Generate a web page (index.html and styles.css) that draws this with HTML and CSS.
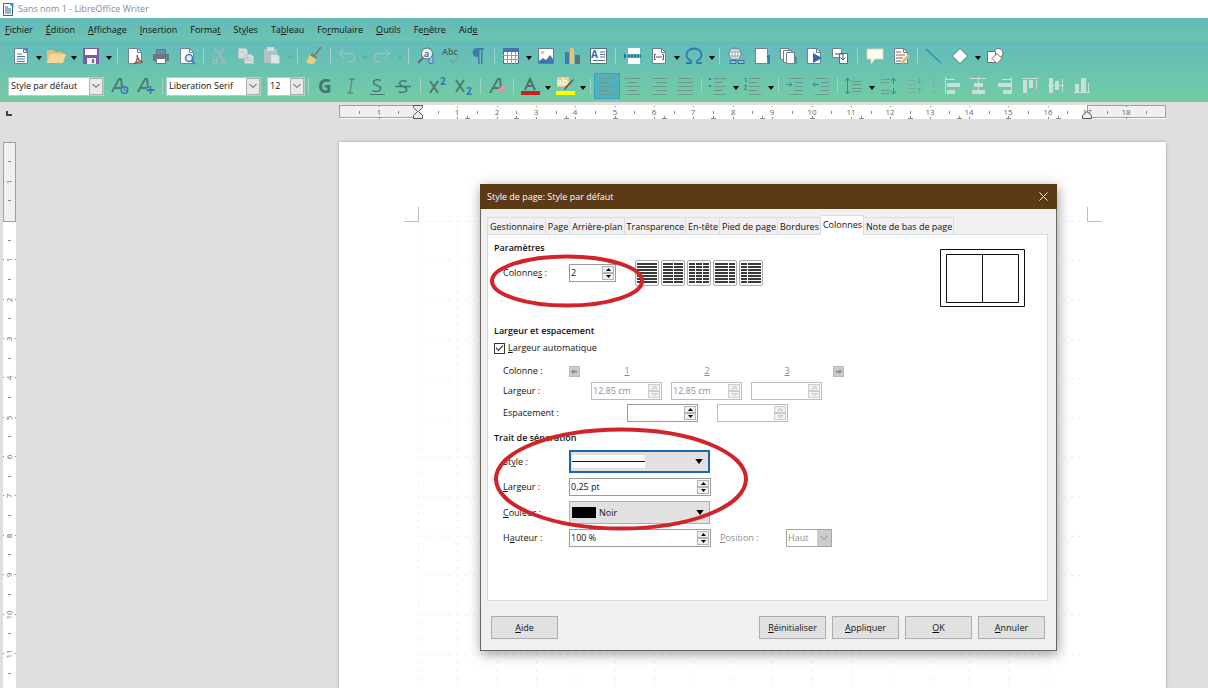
FILE: index.html
```
<!DOCTYPE html>
<html lang="fr">
<head>
<meta charset="utf-8">
<title>Sans nom 1 - LibreOffice Writer</title>
<link rel="stylesheet" href="styles.css">
</head>
<body>
<svg class="defs" width="0" height="0" aria-hidden="true">
  <symbol id="drop" viewBox="0 0 6 4"><path d="M0 0h6L3 4z"/></symbol>
  <symbol id="chev" viewBox="0 0 10 6"><path d="M1.500 1l3.500 3.500L8.500 1" fill="none" stroke="currentColor"/></symbol>
  <symbol id="up" viewBox="0 0 5 3"><path d="M0 3h5L2.500 0z"/></symbol>
  <symbol id="down" viewBox="0 0 5 3"><path d="M0 0h5L2.500 3z"/></symbol>
  <symbol id="sheet" viewBox="0 0 20 20"><path d="M3.500 2.500h9l4 4v11h-13z" fill="#fff" stroke="#71808a"/><path d="M12.500 2.500v4h4" fill="none" stroke="#71808a"/></symbol>
</svg>

<header class="titlebar">
  <svg class="app-icon" viewBox="0 0 12 13"><path d="M1.500.500h6l3 3v9h-9z" fill="#fff" stroke="#2a6c87"/><path d="M7 0h4.500v4.500z" fill="#17a1d0"/><path d="M3 4h3M3 6h6M3 8h6M3 10h6" stroke="#2a6c87"/></svg>
  <h1>Sans nom 1 - LibreOffice Writer</h1>
</header>

<nav class="menubar">
  <button><u>F</u>ichier</button><button><u>É</u>dition</button><button><u>A</u>ffichage</button><button><u>I</u>nsertion</button><button>Forma<u>t</u></button><button>St<u>y</u>les</button><button>Ta<u>b</u>leau</button><button>Fo<u>r</u>mulaire</button><button><u>O</u>utils</button><button>Fe<u>n</u>être</button><button>Aid<u>e</u></button>
</nav>

<div class="toolbars">
  <div class="toolbar" role="toolbar" aria-label="Standard">
    <span class="grip"></span>
    <button class="tool" aria-label="Nouveau"><svg viewBox="0 0 20 20"><use href="#sheet"/><path d="M12 2h5v5z" fill="#4a86c5"/><path d="M6 8h5M6 10.500h8M6 13h8M6 15.500h8" stroke="#4a78a8"/></svg></button>
    <button class="drop" aria-label="Liste Nouveau"><svg><use href="#drop"/></svg></button>
    <button class="tool" aria-label="Ouvrir"><svg viewBox="0 0 20 20"><path d="M1 17V4h6l2 2h8v11z" fill="#e3bd7b"/><path d="M1 17L4 8h16l-3 9z" fill="#f5d79a"/></svg></button>
    <button class="drop" aria-label="Liste Ouvrir"><svg><use href="#drop"/></svg></button>
    <button class="tool" aria-label="Enregistrer"><svg viewBox="0 0 20 20"><path d="M2 2h16v16H2z" fill="#8059a6"/><path d="M4 3h12v6H4z" fill="#fff"/><path d="M6 12h9v6H6z" fill="#f2edf7"/><path d="M11 13h2v4h-2z" fill="#8059a6"/></svg></button>
    <button class="drop" aria-label="Liste Enregistrer"><svg><use href="#drop"/></svg></button>
    <span class="sep wide"></span>
    <button class="tool" aria-label="Exporter au format PDF"><svg viewBox="0 0 20 20"><use href="#sheet"/><path d="M9 18c3-2 4-6 3-9 1 5 3 7 6 7-3-.5-6 0-9 2z" fill="none" stroke="#8a5146" stroke-width="1.300"/></svg></button>
    <button class="tool" aria-label="Imprimer"><svg viewBox="0 0 20 20"><path d="M5.500 3.500h9v5h-9z" fill="#6b8fb4" stroke="#5a7390"/><path d="M2 8h16v7H2z" fill="#6b7884"/><path d="M5.500 12.500h9v5h-9z" fill="#fff" stroke="#6b7884"/></svg></button>
    <button class="tool" aria-label="Aperçu"><svg viewBox="0 0 20 20"><use href="#sheet"/><circle cx="12" cy="12" r="3.500" fill="#dceefa" stroke="#3f7fb8" stroke-width="1.500"/><path d="M14.500 14.500L18 18" stroke="#3f7fb8" stroke-width="2"/></svg></button>
    <span class="sep"></span>
    <button class="tool" aria-label="Couper" disabled><svg viewBox="0 0 20 20" fill="none" stroke="#9fbcbc" stroke-width="1.600"><path d="M5 2l8 12M14 2L6 14"/><circle cx="5" cy="16" r="2"/><circle cx="14" cy="16" r="2"/></svg></button>
    <button class="tool" aria-label="Copier" disabled><svg viewBox="0 0 20 20" fill="#d6dfdf" stroke="#b3c4c4"><path d="M2.500 2.500h7l2 2v8h-9zM8.500 8.500h7l2 2v7h-9z"/><path d="M10 12h5M10 14.500h6M4 6h4"/></svg></button>
    <button class="tool" aria-label="Coller" disabled><svg viewBox="0 0 20 20"><path d="M2 3h13v14H2z" fill="#b3c2c2"/><path d="M5 1h7v4H5z" fill="#d3dddc"/><path d="M8.500 8.500h7l2 2v7h-9z" fill="#dde5e4" stroke="#b3c4c4"/></svg></button>
    <button class="drop faint" aria-label="Liste Coller" disabled><svg><use href="#drop"/></svg></button>
    <span class="sep"></span>
    <button class="tool" aria-label="Cloner le formatage"><svg viewBox="0 0 20 20"><path d="M17 1l-6 8" stroke="#7d7f75" stroke-width="2"/><path d="M8 7l5 4-1 2-6-4z" fill="#7d7f75"/><path d="M5 9l7 4c0 3-2 5-4 5-3 0-5-1-6-3 2-1 3-3 3-6z" fill="#f0cb86"/></svg></button>
    <span class="sep"></span>
    <button class="tool" aria-label="Annuler" disabled><svg viewBox="0 0 20 20" fill="none" stroke="#97bfbf" stroke-width="1.700"><path d="M7 3L2.500 7.500 7 12M3 7.500h10c6 0 6 8 0 8.500h-2"/></svg></button>
    <button class="drop faint" aria-label="Liste Annuler" disabled><svg><use href="#drop"/></svg></button>
    <button class="tool" aria-label="Rétablir" disabled><svg viewBox="0 0 20 20" fill="none" stroke="#97bfbf" stroke-width="1.700"><path d="M13 3l4.500 4.500L13 12M17 7.500H7c-6 0-6 8 0 8.500h2"/></svg></button>
    <button class="drop faint" aria-label="Liste Rétablir" disabled><svg><use href="#drop"/></svg></button>
    <span class="sep wider"></span>
    <button class="tool" aria-label="Rechercher et remplacer"><svg viewBox="0 0 20 20"><path d="M7 12l-5 5" stroke="#5c6b6b" stroke-width="2"/><path d="M13 8.500h4v9h-4z" fill="#8fc4e8" stroke="#3f7fb8"/><circle cx="11" cy="7.500" r="5.500" fill="#eef6f8" stroke="#5c6b6b"/><text x="8" y="11" class="t9" fill="#4a5a60">a</text></svg></button>
    <button class="tool" aria-label="Orthographe"><svg viewBox="0 0 20 20"><text x="0" y="9" class="t9" fill="#46645f">Abc</text><path d="M8 14l3 3 6-7" fill="none" stroke="#6ca59c" stroke-width="1.500"/></svg></button>
    <button class="tool" aria-label="Marques de formatage"><svg viewBox="0 0 20 20"><path d="M16 2H9a4.500 4.500 0 0 0 0 9h1v7h1.500V3.500H13V18h1.500V3.500H16z" fill="#4079ae"/></svg></button>
    <span class="sep"></span>
    <button class="tool" aria-label="Tableau"><svg viewBox="0 0 20 20"><path d="M2.500 2.500h15v15h-15z" fill="#fff" stroke="#4a6b8c"/><path d="M2 2h16v4H2z" fill="#3f74ad"/><path d="M2 9.500h16M2 13.500h16M6.500 6v12M10.500 6v12M14.500 6v12" stroke="#8b9fb5"/></svg></button>
    <button class="drop" aria-label="Liste Tableau"><svg><use href="#drop"/></svg></button>
    <button class="tool" aria-label="Image"><svg viewBox="0 0 20 20"><path d="M2.500 2.500h15v15h-15z" fill="#fff" stroke="#5e7f92"/><circle cx="6.500" cy="6.500" r="1.800" fill="#f0c27d"/><path d="M3 15l4-3 3 2 4-5 3 4v4H3z" fill="#3f74ad"/></svg></button>
    <button class="tool" aria-label="Diagramme"><svg viewBox="0 0 20 20"><path d="M3 6h4v12H3z" fill="#3f79b5"/><path d="M8 2h4v16H8z" fill="#e5c17e"/><path d="M13 9h5v9h-5z" fill="#5c737a"/></svg></button>
    <button class="tool" aria-label="Zone de texte"><svg viewBox="0 0 20 20"><path d="M2.500 2.500h16v15h-16z" fill="#fff" stroke="#55707c"/><text x="3" y="12" class="t10" fill="#2f6ba8">A</text><path d="M12 6h5M12 8.500h5M12 11h5M5 14.500h12" stroke="#55707c"/></svg></button>
    <span class="sep wide"></span>
    <button class="tool" aria-label="Saut de page"><svg viewBox="0 0 20 20"><path d="M5 2h12v6H5zM5 12h12v6H5z" fill="#fff"/><path d="M5 10h13" stroke="#2f6ba8" stroke-width="3" stroke-dasharray="2 1"/><path d="M1 7l3 3-3 3z" fill="#2f6ba8"/></svg></button>
    <button class="tool" aria-label="Champ"><svg viewBox="0 0 20 20"><use href="#sheet"/><path d="M7 8.500H5.500v5H7M13 8.500h1.500v5H13M7 11h6" fill="none" stroke="#44606c"/></svg></button>
    <button class="drop" aria-label="Liste Champ"><svg><use href="#drop"/></svg></button>
    <button class="tool" aria-label="Caractère spécial"><svg viewBox="0 0 20 20"><path d="M2 17h5v-2C3.500 13 2.500 11 2.500 8.500 2.500 5 6 2.500 10 2.500S17.500 5 17.500 8.500c0 2.500-1 4.500-4.500 6.500v2h5" fill="none" stroke="#3577ae" stroke-width="1.800"/></svg></button>
    <button class="drop" aria-label="Liste Caractère spécial"><svg><use href="#drop"/></svg></button>
    <span class="sep"></span>
    <button class="tool" aria-label="Hyperlien"><svg viewBox="0 0 20 20"><circle cx="9" cy="8" r="6" fill="#fff" stroke="#5f7b85"/><path d="M3 6h12M3 10h12M9 2v12M9 2c-4 3-4 9 0 12M9 2c4 3 4 9 0 12" fill="none" stroke="#7b939b" stroke-width=".8"/><path d="M4 14.500h6v3H4zM12 14.500h6v3h-6z" fill="#8fc4e0" stroke="#2f6ba8"/></svg></button>
    <button class="tool" aria-label="Note de bas de page"><svg viewBox="0 0 20 20"><path d="M3.500 2.500h12v15h-12z" fill="#fff" stroke="#71808a"/><path d="M15 11l2-1v8" fill="none" stroke="#2f6ba8" stroke-width="1.500"/></svg></button>
    <button class="tool" aria-label="Note de fin"><svg viewBox="0 0 20 20" fill="#fff" stroke="#71808a"><path d="M2.500 2.500h8v11h-8z"/><path d="M5.500 4.500h8v12h-8z"/><path d="M8.500 6.500h8v11h-8z"/><path d="M16 12l2-1v7" fill="none" stroke="#2f6ba8"/></svg></button>
    <button class="tool" aria-label="Repère de texte"><svg viewBox="0 0 20 20"><use href="#sheet"/><path d="M9 7l9 5-9 5z" fill="#2f6ba8"/></svg></button>
    <button class="tool" aria-label="Renvoi"><svg viewBox="0 0 20 20"><path d="M2.500 2.500h9v9h-9z" fill="#fff" stroke="#71808a"/><path d="M9.500 7.500h8v10h-8z" fill="#fff" stroke="#55707c"/><path d="M5 8h8v6M10.500 11.500L13 14l2.500-2.500" fill="none" stroke="#375f74"/></svg></button>
    <span class="sep wide"></span>
    <button class="tool" aria-label="Commentaire"><svg viewBox="0 0 20 20"><path d="M2 3h16v10h-8l-4 5v-5H2z" fill="#fffdf0" stroke="#d7d5ab"/></svg></button>
    <button class="tool" aria-label="Suivi des modifications"><svg viewBox="0 0 20 20"><use href="#sheet"/><path d="M5 6h5M5 9h9M5 12h7" stroke="#a15353"/><path d="M5 15h5" stroke="#4c6b75"/><path d="M18 9l-7 8" stroke="#d4bd75" stroke-width="3"/></svg></button>
    <span class="sep"></span>
    <button class="tool" aria-label="Ligne"><svg viewBox="0 0 20 20"><path d="M2 3l15 14" stroke="#318fae" stroke-width="1.300"/></svg></button>
    <button class="tool" aria-label="Formes"><svg viewBox="0 0 20 20"><path d="M10 2.500l7.500 7.500-7.500 7.500L2.500 10z" fill="#fff" stroke="#5c7f86"/></svg></button>
    <button class="drop" aria-label="Liste Formes"><svg><use href="#drop"/></svg></button>
    <button class="tool" aria-label="Fonctions de dessin"><svg viewBox="0 0 20 20" fill="#fff" stroke="#5f7478"><circle cx="13.500" cy="7" r="4.500"/><path d="M2.500 5.500h8v11h-8z"/><path d="M12 7.500l5 5-5 5-5-5z" stroke="#865f68"/></svg></button>
  </div>

  <div class="toolbar" role="toolbar" aria-label="Formatage">
    <span class="grip"></span>
    <span class="combo combo-style"><input aria-label="Style de paragraphe" value="Style par défaut"><button aria-label="Choisir un style"><svg><use href="#chev"/></svg></button></span>
    <button class="tool after-combo" aria-label="Actualiser le style"><svg viewBox="0 0 20 20"><path d="M2 16L9 3l2 0 1 8M5 12h6" fill="none" stroke="#4f7a74" stroke-width="1.900"/><circle cx="14.500" cy="14" r="3.300" fill="none" stroke="#3577ae" stroke-width="1.400"/><path d="M14.500 11.500v3h2.500" fill="none" stroke="#3577ae"/></svg></button>
    <button class="tool" aria-label="Nouveau style"><svg viewBox="0 0 20 20"><path d="M2 16L9 3l2 0 1 9M5 12h6" fill="none" stroke="#4f7a74" stroke-width="1.900"/><path d="M14.500 10v8M10.500 14h8" stroke="#3577ae" stroke-width="1.800"/></svg></button>
    <span class="sep"></span>
    <span class="combo combo-font"><input aria-label="Police" value="Liberation Serif"><button aria-label="Choisir une police"><svg><use href="#chev"/></svg></button></span>
    <span class="combo combo-size"><input aria-label="Taille" value="12"><button aria-label="Choisir une taille"><svg><use href="#chev"/></svg></button></span>
    <span class="sep"></span>
    <button class="tool" aria-label="Gras"><svg viewBox="0 0 20 20"><text x="10" y="17" class="glyph bold">G</text></svg></button>
    <button class="tool" aria-label="Italique"><svg viewBox="0 0 20 20"><path d="M8 3h6M11 3L9 17M6 17h6" fill="none" stroke="#5d8a82" stroke-width="1.400"/></svg></button>
    <button class="tool" aria-label="Souligné"><svg viewBox="0 0 20 20"><text x="10" y="16" class="glyph">S</text><path d="M3 18.500h15" stroke="#47766f"/></svg></button>
    <button class="tool" aria-label="Barré"><svg viewBox="0 0 20 20"><text x="10" y="17" class="glyph">S</text><path d="M2 10.500h16" stroke="#47766f" stroke-width="1.500"/></svg></button>
    <span class="sep wide"></span>
    <button class="tool" aria-label="Exposant"><svg viewBox="0 0 20 20"><path d="M2 5l8 12M10 5L2 17" stroke="#4f7a74" stroke-width="1.900"/><text x="12" y="9" class="t10 blue">2</text></svg></button>
    <button class="tool" aria-label="Indice"><svg viewBox="0 0 20 20"><path d="M2 4l8 12M10 4L2 16" stroke="#4f7a74" stroke-width="1.900"/><text x="12" y="19" class="t10 blue">2</text></svg></button>
    <span class="sep"></span>
    <button class="tool" aria-label="Effacer le formatage"><svg viewBox="0 0 20 20"><path d="M3 17L11 3l2 0 1 9M6 12h7" fill="none" stroke="#4f7a74" stroke-width="1.900"/><path d="M17.500 10l-6 6" stroke="#dc97a8" stroke-width="4"/></svg></button>
    <span class="sep"></span>
    <button class="tool" aria-label="Couleur de police"><svg viewBox="0 0 20 20"><path d="M5 14l5-11 5 11M7 10h6" fill="none" stroke="#47766f" stroke-width="2"/><path d="M1 15h19v4H1z" fill="#c9211e"/></svg></button>
    <button class="drop" aria-label="Liste Couleur de police"><svg><use href="#drop"/></svg></button>
    <button class="tool" aria-label="Surlignage"><svg viewBox="0 0 20 20"><path d="M2 1h12v10H2z" fill="#f3cf8e"/><text x="2" y="9" class="t9" fill="#fff">ab</text><path d="M19 4l-8 9-2 1 1-3 8-8z" fill="#47645f"/><path d="M1 15h19v4H1z" fill="#ff0"/></svg></button>
    <button class="drop" aria-label="Liste Surlignage"><svg><use href="#drop"/></svg></button>
    <span class="sep"></span>
    <button class="tool active" aria-label="Aligner à gauche" aria-pressed="true"><svg viewBox="0 0 20 20" class="lines"><path d="M2 2.500h15M2 6.500h10M2 10.500h15M2 14.500h10M2 18.500h15"/></svg></button>
    <button class="tool" aria-label="Centrer"><svg viewBox="0 0 20 20" class="lines"><path d="M2 2.500h15M5 6.500h9M2 10.500h15M5 14.500h9M2 18.500h15"/></svg></button>
    <button class="tool" aria-label="Aligner à droite"><svg viewBox="0 0 20 20" class="lines"><path d="M3 2.500h15M8 6.500h10M3 10.500h15M8 14.500h10M3 18.500h15"/></svg></button>
    <button class="tool" aria-label="Justifier"><svg viewBox="0 0 20 20" class="lines"><path d="M3 2.500h15M3 6.500h15M3 10.500h15M3 14.500h15M3 18.500h15"/></svg></button>
    <span class="sep"></span>
    <button class="tool" aria-label="Puces"><svg viewBox="0 0 20 20" class="lines"><path d="M6 2.500h12M6 6.500h8M6 10.500h12M6 14.500h8M6 18.500h12"/><path d="M1 3h2M1 10h2" class="mark"/></svg></button>
    <button class="drop" aria-label="Liste Puces"><svg><use href="#drop"/></svg></button>
    <button class="tool" aria-label="Numérotation"><svg viewBox="0 0 20 20" class="lines"><path d="M6 2.500h12M6 6.500h8M6 10.500h12M6 14.500h8M6 18.500h12"/><path d="M1.500 2.500h1.500v4M1 9.500h2.500l-2 4h2.500" class="thin"/></svg></button>
    <button class="drop" aria-label="Liste Numérotation"><svg><use href="#drop"/></svg></button>
    <span class="sep"></span>
    <button class="tool" aria-label="Augmenter le retrait"><svg viewBox="0 0 20 20" class="lines"><path d="M4 2.500h14M10 6.500h8M10 10.500h8M10 14.500h8M4 18.500h14"/><path d="M1 8.500h6M4.500 6L7 8.500 4.500 11" class="thin"/></svg></button>
    <button class="tool" aria-label="Diminuer le retrait"><svg viewBox="0 0 20 20" class="lines"><path d="M4 2.500h14M10 6.500h8M10 10.500h8M10 14.500h8M4 18.500h14"/><path d="M8 8.500H2M4.500 6L2 8.500 4.500 11" class="thin"/></svg></button>
    <span class="sep"></span>
    <button class="tool" aria-label="Interligne"><svg viewBox="0 0 20 20" class="lines"><path d="M8 5.500h10M8 8.500h10M8 12.500h10M8 15.500h10"/><path d="M3.500 2v16M1 5l2.500-3L6 5M1 15l2.500 3L6 15" class="thin"/></svg></button>
    <button class="drop" aria-label="Liste Interligne"><svg><use href="#drop"/></svg></button>
    <button class="tool" aria-label="Augmenter l'espacement"><svg viewBox="0 0 20 20" class="lines"><path d="M2 3.500h9M2 6.500h9M2 14.500h9M2 17.500h9"/><path d="M14.500 2v6M14.500 12v6M12 5l2.500-3L17 5M12 15l2.500 3 2.500-3" class="thin"/></svg></button>
    <button class="tool dim" aria-label="Diminuer l'espacement"><svg viewBox="0 0 20 20" class="lines"><path d="M2 4.500h9M2 8.500h9M2 12.500h9M2 16.500h9"/><path d="M14.500 2v6M14.500 12v6M12 5.500L14.500 8 17 5.500M12 14.500l2.500-2.500 2.500 2.500" class="thin"/></svg></button>
    <span class="sep wider dotted"></span>
    <button class="tool" aria-label="Aligner les objets à gauche"><svg viewBox="0 0 20 20" class="shape"><path d="M3 1h1v17H3zM5 7h13v4H5zM5 14h8v4H5zM4 3h9v1H4z"/></svg></button>
    <button class="tool" aria-label="Centrer les objets"><svg viewBox="0 0 20 20" class="shape"><path d="M2 2h16v1H2zM10 1h1v17h-1zM6 7h9v4H6zM4 14h13v4H4z"/></svg></button>
    <button class="tool" aria-label="Aligner les objets à droite"><svg viewBox="0 0 20 20" class="shape"><path d="M17 1h1v17h-1zM4 7h13v4H4zM9 14h8v4H9zM8 3h9v1H8z"/></svg></button>
    <button class="tool" aria-label="Aligner en haut"><svg viewBox="0 0 20 20" class="shape"><path d="M2 2h16v1H2zM3 4h4v13H3zM9 4h4v8H9zM16 4h1v9h-1z"/></svg></button>
    <button class="tool" aria-label="Centrer verticalement"><svg viewBox="0 0 20 20" class="shape"><path d="M2 9h16v1H2zM3 2h4v15H3zM9 5h4v9H9zM16 3h1v13h-1z"/></svg></button>
    <button class="tool" aria-label="Aligner en bas"><svg viewBox="0 0 20 20" class="shape"><path d="M2 16h16v1H2zM3 8h4v8H3zM9 2h5v14H9zM16 7h1v9h-1z"/></svg></button>
  </div>
</div>

<main class="workspace">
  <aside class="side">
    <svg class="tab-kind" viewBox="0 0 6 5"><path d="M1 0v4h5" fill="none" stroke="#444" stroke-width="2"/></svg>
    <svg class="vruler" id="vruler"></svg>
  </aside>
  <section class="document">
    <svg class="hruler" id="hruler"></svg>
    <article class="page">
      <svg width="100%" height="100%">
        <defs>
          <pattern id="grid" width="39.350" height="39.350" patternUnits="userSpaceOnUse" x="79" y="79">
            <g fill="#cfcfcf"><path d="M0 0h1v1H0zM8 0h1v1H8zM16 0h1v1h-1zM24 0h1v1h-1zM31 0h1v1h-1zM0 8h1v1H0zM0 16h1v1H0zM0 24h1v1H0zM0 31h1v1H0z"/></g>
          </pattern>
        </defs>
        <rect x="79" y="79" width="669" height="100%" fill="url(#grid)"/>
        <path d="M79.500 65v14.500H65M748.500 65v14.500H763" fill="none" stroke="#bdbdbd"/>
      </svg>
    </article>
  </section>
</main>

<div class="dialog" role="dialog" aria-labelledby="dialog-title">
  <div class="dialog-title"><h2 id="dialog-title">Style de page: Style par défaut</h2><button aria-label="Fermer"><svg viewBox="0 0 9 9"><path d="M.500.500l8 8M8.500.500l-8 8" stroke="#fff" fill="none"/></svg></button></div>
  <div class="dialog-body">
    <div class="tabs" role="tablist">
      <button role="tab">Gestionnaire</button><button role="tab">Page</button><button role="tab">Arrière-plan</button><button role="tab">Transparence</button><button role="tab">En-tête</button><button role="tab">Pied de page</button><button role="tab">Bordures</button><button role="tab" class="selected" aria-selected="true">Colonnes</button><button role="tab">Note de bas de page</button>
    </div>
    <div class="pane" role="tabpanel">
      <section class="params">
        <div class="params-main">
          <h3>Paramètres</h3>
          <div class="row tall">
            <label for="cols">Colonne<u>s</u> :</label>
            <span class="spin small"><input id="cols" value="2"><span class="arrows"><button aria-label="Plus"><svg><use href="#up"/></svg></button><button aria-label="Moins"><svg><use href="#down"/></svg></button></span></span>
            <div class="presets">
              <button aria-label="1 colonne"><svg viewBox="0 0 20 22"><path d="M0 2h20M0 5h20M0 8h20M0 11h20M0 14h20M0 17h20M0 20h20"/></svg></button>
              <button aria-label="2 colonnes"><svg viewBox="0 0 20 22"><path d="M0 2h20M0 5h20M0 8h20M0 11h20M0 14h20M0 17h20M0 20h20"/><path class="gap" d="M10.500 0v22"/></svg></button>
              <button aria-label="3 colonnes"><svg viewBox="0 0 20 22"><path d="M0 2h20M0 5h20M0 8h20M0 11h20M0 14h20M0 17h20M0 20h20"/><path class="gap" d="M6.500 0v22M13.500 0v22"/></svg></button>
              <button aria-label="2 colonnes, gauche large"><svg viewBox="0 0 20 22"><path d="M0 2h20M0 5h20M0 8h20M0 11h20M0 14h20M0 17h20M0 20h20"/><path class="gap" d="M13.500 0v22"/></svg></button>
              <button aria-label="2 colonnes, droite large"><svg viewBox="0 0 20 22"><path d="M0 2h20M0 5h20M0 8h20M0 11h20M0 14h20M0 17h20M0 20h20"/><path class="gap" d="M6.500 0v22"/></svg></button>
            </div>
          </div>
        </div>
        <svg class="preview" viewBox="0 0 85 58"><path d="M.500.500h84v57H.500zM6.500 5.500h72v48h-72zM42.500 5v49" fill="#fff" stroke="#111"/></svg>
      </section>

      <section class="widths">
        <h3>Largeur et espacement</h3>
        <label class="check"><input type="checkbox" checked><span><u>L</u>argeur automatique</span></label>
        <div class="row numbers">
          <span class="label">Colonne :</span>
          <button class="step" disabled aria-label="Colonne précédente"><svg viewBox="0 0 8 8"><path d="M0 4l3-3v2h4v2H3v2z"/></svg></button>
          <span class="num"><u>1</u></span><span class="num"><u>2</u></span><span class="num"><u>3</u></span>
          <button class="step" disabled aria-label="Colonne suivante"><svg viewBox="0 0 8 8"><path d="M8 4L5 1v2H1v2h4v2z"/></svg></button>
        </div>
        <div class="row sizes">
          <label for="w1">Lar<u>g</u>eur :</label>
          <span class="spin mid off"><input id="w1" value="12,85 cm" disabled><span class="arrows"><button disabled aria-label="Plus"><svg><use href="#up"/></svg></button><button disabled aria-label="Moins"><svg><use href="#down"/></svg></button></span></span>
          <span class="spin mid off"><input aria-label="Largeur 2" value="12,85 cm" disabled><span class="arrows"><button disabled aria-label="Plus"><svg><use href="#up"/></svg></button><button disabled aria-label="Moins"><svg><use href="#down"/></svg></button></span></span>
          <span class="spin mid off"><input aria-label="Largeur 3" disabled><span class="arrows"><button disabled aria-label="Plus"><svg><use href="#up"/></svg></button><button disabled aria-label="Moins"><svg><use href="#down"/></svg></button></span></span>
        </div>
        <div class="row spacing">
          <label for="s1">Espacement :</label>
          <span class="spin mid"><input id="s1"><span class="arrows"><button aria-label="Plus"><svg><use href="#up"/></svg></button><button aria-label="Moins"><svg><use href="#down"/></svg></button></span></span>
          <span class="spin mid off"><input aria-label="Espacement 2" disabled><span class="arrows"><button disabled aria-label="Plus"><svg><use href="#up"/></svg></button><button disabled aria-label="Moins"><svg><use href="#down"/></svg></button></span></span>
        </div>
      </section>

      <section class="separator">
        <h3>Trait de séparation</h3>
        <div class="row"><label for="st">St<u>y</u>le :</label>
          <span class="picker focus"><select id="st"><option></option></select><span class="line-sample"></span><svg class="caret"><use href="#drop"/></svg></span></div>
        <div class="row"><label for="lw"><u>L</u>argeur :</label>
          <span class="spin big"><input id="lw" value="0,25 pt"><span class="arrows"><button aria-label="Plus"><svg><use href="#up"/></svg></button><button aria-label="Moins"><svg><use href="#down"/></svg></button></span></span></div>
        <div class="row"><label for="co"><u>C</u>ouleur :</label>
          <span class="picker"><select id="co"><option>Noir</option></select><span class="swatch"></span><svg class="caret"><use href="#drop"/></svg></span></div>
        <div class="row"><label for="ht">H<u>a</u>uteur :</label>
          <span class="spin big"><input id="ht" value="100 %"><span class="arrows"><button aria-label="Plus"><svg><use href="#up"/></svg></button><button aria-label="Moins"><svg><use href="#down"/></svg></button></span></span>
          <label class="position" for="po"><u>P</u>osition :</label>
          <span class="mini-select"><select id="po" disabled><option>Haut</option></select><svg><use href="#chev"/></svg></span></div>
      </section>
    </div>
    <footer class="actions">
      <button><u>A</u>ide</button><span class="spacer"></span><button><u>R</u>éinitialiser</button><button><u>A</u>ppliquer</button><button><u>O</u>K</button><button><u>A</u>nnuler</button>
    </footer>
  </div>
  <svg class="annotations" aria-hidden="true" fill="none" stroke="#d2232a">
    <ellipse cx="86" cy="97" rx="75" ry="24.500" stroke-width="4"/>
    <ellipse cx="140" cy="295" rx="125" ry="49.500" stroke-width="4"/>
  </svg>
</div>
<script src="rulers.js"></script>
</body>
</html>
```
FILE: rulers.js
```
const CM = 39.35;

function build(end, zero, from, to) {
  let out = '';
  for (let i = from; i <= to; i++) {
    const p = Math.round(zero + i * CM);
    if (i !== 0) {
      out += `<text x="${p}" y="10">${Math.abs(i)}</text>`;
    }
    out += `<path d="M${p}.5 1v1M${p}.5 12v2"/>`;
    const h = Math.round(zero + (i + 0.5) * CM);
    if (h < end) out += `<path d="M${h}.5 6v3"/>`;
  }
  return out;
}

const h = document.getElementById('hruler');
let tabs = '';
for (let t = 1; t <= 13; t++) {
  const x = Math.round(79 + t * 49.2);
  tabs += `<path d="M${x - 2} 13.500h5M${x + 0.5} 11v3"/>`;
}
h.innerHTML =
  '<rect class="fill" width="827" height="14"/>' +
  '<rect class="off" x=".5" y=".5" width="79" height="12"/>' +
  '<rect class="off" x="748.5" y=".5" width="78" height="12"/>' +
  '<g class="ticks"><path d="M20.500 6v3"/>' + build(827, 79, -1, 18) + tabs + '</g>' +
  '<path class="marker" d="M74.500.500h9v2l-4 4 4 4v3h-9v-3l4-4-4-4z"/>' +
  '<path class="marker" d="M743.500 13.500h9v-3l-4.500-4-4.500 4z"/>';

const v = document.getElementById('vruler');
v.innerHTML =
  '<rect class="fill" width="13" height="100%"/>' +
  '<rect class="off" x=".5" y=".5" width="12" height="79"/>' +
  '<g class="ticks" transform="rotate(-90)">' +
  Array.from({ length: 14 }, (_, n) => {
    const i = n - 1;
    const y = -Math.round(79 + i * CM);
    const half = -Math.round(79 + (i + 0.5) * CM);
    return (i ? `<text x="${y}" y="9">${Math.abs(i)}</text><path d="M${y + 0.5} 0v1M${y + 0.5} 12v1"/>` : '') +
      `<path d="M${half + 0.5} 5v3"/>`;
  }).join('') + '<path d="M-19.500 5v3"/></g>';
```
FILE: styles.css
```
* { box-sizing: border-box; }
body {
  margin: 0;
  height: 100vh;
  display: flex;
  flex-direction: column;
  overflow: hidden;
  position: relative;
  background: #dfdfdf;
  color: #111;
  font: 9px/14px "Open Sans", "Noto Sans", sans-serif;
}
button, input, select { font: inherit; color: inherit; margin: 0; padding: 0; border: 0; background: none; border-radius: 0; }
h1, h2, h3 { margin: 0; font-size: 9px; font-weight: 400; line-height: 14px; }
svg { display: block; }
.defs { position: absolute; }

.titlebar { display: flex; align-items: center; gap: 4px; height: 18px; padding: 0 2px; background: #fff; color: #8a8a8a; flex: none; }
.app-icon { width: 12px; height: 13px; }

.menubar { display: flex; gap: 13px; align-items: center; height: 23px; padding: 0 5px; flex: none; background: linear-gradient(#63b9b9, #6cc4b1); }

.toolbars { flex: none; background: linear-gradient(#62bbbb, #74cca5); padding-bottom: 1px; }
.toolbar { display: flex; align-items: center; height: 30px; }
.grip { width: 3px; margin-right: 5px; height: 18px; border-right: 1px solid #84b6ae; flex: none; }
.tool { width: 26px; height: 26px; display: flex; align-items: center; justify-content: center; flex: none; }
.tool svg { width: 20px; height: 20px; overflow: visible; flex: none; }
.tool.active { background: #4fb0bf; border: 1px solid #3b9fba; }
.drop { width: 9px; height: 26px; display: flex; align-items: center; justify-content: center; flex: none; }
.drop svg { width: 6px; height: 4px; margin-top: 4px; }
.drop.faint { opacity: .08; }
.dim .lines { opacity: .4; }
.sep { width: 1px; height: 16px; margin: 0 3px; background: #a2d3cc; flex: none; }
.sep.wide { margin: 0 4px; }
.sep.wider { margin: 0 4px; }
.sep.dotted { background: none; width: 3px; border-left: 3px dotted #79b7a4; }
.after-combo { margin-left: 3px; }
.t9 { font: 600 9px "Open Sans", sans-serif; }
.t10 { font: 700 10px "Open Sans", sans-serif; }
.blue { fill: #3577ae; }
.glyph { font: 19px "Open Sans", sans-serif; text-anchor: middle; fill: #47766f; }
.glyph.bold { font-weight: 700; }
.lines { fill: none; stroke: #6d988d; stroke-width: 1; }
.lines .mark { stroke: #2f82a0; stroke-width: 2; }
.lines .thin { stroke: #3189a6; }
.shape { fill: #c9e0d6; }

.combo { display: flex; height: 19px; background: #fff; border: 1px solid #b7cfca; flex: none; }
.combo input { flex: 1; min-width: 0; padding-left: 2px; }
.combo button { width: 14px; background: #e9e9e9; border: 1px solid #adadad; display: flex; align-items: center; justify-content: center; color: #444; }
.combo svg { width: 10px; height: 6px; flex: none; }
.combo-style { width: 96px; }
.combo-font { width: 95px; }
.combo-size { width: 38px; margin-left: 6px; }

.workspace { flex: 1; min-height: 0; display: flex; }
.side { width: 16px; padding: 9px 0 0 3px; display: flex; flex-direction: column; gap: 26px; }
.tab-kind { width: 6px; height: 5px; margin-left: 3px; flex: none; }
.vruler { width: 13px; flex: 1; min-height: 0; }
.document { flex: 1; padding: 3px 42px 0 323px; display: flex; flex-direction: column; gap: 23px; }
.hruler { width: 100%; height: 14px; flex: none; }
.fill { fill: #fff; }
.off { fill: #f0f0f0; stroke: #a0a0a0; }
.ticks path { stroke: #8a8a8a; }
.ticks text { font: 8px "Open Sans", sans-serif; fill: #666; text-anchor: middle; }
.marker { fill: #eee; stroke: #555; }
.page { flex: 1; min-height: 0; background: #fff; box-shadow: 0 0 3px #999; }

.dialog { position: absolute; left: 480px; top: 184px; width: 577px; background: #f0f0f0; border: 1px solid #6e675f; border-top: 0; box-shadow: 1px 3px 12px rgba(0, 0, 0, .4); }
.dialog-title { height: 25px; margin: 0 -1px; padding: 0 9px 0 7px; background: #5c3917; color: #fff; display: flex; align-items: center; justify-content: space-between; }
.dialog-title svg { width: 9px; height: 9px; }
.dialog-body { padding: 6px 8px 11px 6px; }
.tabs { display: flex; align-items: flex-end; height: 19px; }
.tabs button { height: 17px; padding: 1px 1px 0 2px; border: 1px solid #dcdcdc; border-width: 1px 1px 0 0; white-space: nowrap; }
.tabs button:first-child { border-left-width: 1px; }
.tabs .selected { height: 20px; padding-bottom: 2px; margin-bottom: -1px; background: #fff; position: relative; }
.pane { background: #fff; border: 1px solid #d5dbe0; padding: 6px 22px 48px 6px; }
h3 { font-weight: 600; }
.params { display: flex; justify-content: space-between; margin-bottom: 17px; }
.preview { width: 85px; height: 58px; margin-top: 8px; }
.row { display: flex; align-items: center; height: 18px; padding-left: 9px; }
.row > label:first-child, .label { width: 66px; flex: none; }
.row.tall { height: 27px; margin-top: 4px; }
.spin { display: flex; height: 18px; background: #fff; border: 1px solid #9b9b9b; }
.spin input { flex: 1; min-width: 0; padding-left: 1px; }
.spin.off { border-color: #bcbcbc; color: #8d8d8d; }
.arrows { display: flex; flex-direction: column; width: 12px; margin: 1px; }
.arrows button { flex: 1; min-height: 0; background: #f0f0f0; border: 1px solid #b4b4b4; display: flex; align-items: center; justify-content: center; }
.arrows svg { width: 5px; height: 3px; flex: none; }
.off .arrows button { border-color: #cdcdcd; }
.off .arrows svg { opacity: .6; }
.small { width: 47px; }
.mid { width: 71px; }
.big { width: 142px; }
.presets { display: flex; gap: 2px; margin-left: 19px; }
.presets button { width: 24px; height: 26px; border: 1px solid #aaa; border-radius: 2px; background: #fbfbfb; padding: 1px; }
.presets svg { width: 20px; height: 22px; fill: none; stroke: #3a3a3a; stroke-width: 2; }
.presets .gap { stroke: #fbfbfb; stroke-width: 1; }

.check { display: flex; align-items: center; gap: 3px; margin-top: 3px; }
.check input { appearance: none; width: 11px; height: 11px; border: 1px solid #333; background: #fff; display: grid; place-items: center; }
.check input::before { content: ""; width: 6px; height: 3px; border: solid #222; border-width: 0 0 1px 1px; rotate: -45deg; margin-bottom: 2px; }
.numbers { height: 14px; margin: 9px 0 4px; }
.step { width: 11px; height: 11px; background: #ccc; border: 1px solid #bbb; padding: 1px; }
.step svg { width: 7px; height: 7px; fill: #888; }
.num { width: 80px; text-align: center; color: #8d8d8d; }
.numbers .num:nth-child(3) { margin-left: 7px; }
.numbers .step:last-child { margin-left: 6px; }
.sizes { gap: 9px; }
.sizes .spin:nth-child(2) { margin-left: 13px; }
.spacing { margin-top: 4px; gap: 19px; }
.spacing .spin:nth-child(2) { margin-left: 39px; }

.separator h3 { margin: 9px 0 5px; }
.separator { display: flex; flex-direction: column; }
.separator .row { min-height: 18px; height: auto; margin-bottom: 5px; }
.picker { position: relative; width: 141px; height: 23px; border: 1px solid #adadad; background: #e1e1e1; display: flex; align-items: center; }
.picker select { appearance: none; width: 100%; height: 100%; padding-left: 29px; }
.picker.focus { border: 2px solid #1769b5; }
.line-sample, .swatch, .caret { position: absolute; pointer-events: none; }
.line-sample { left: 1px; top: 3px; width: 73px; height: 13px; background: linear-gradient(#111, #111) center / 100% 1px no-repeat #fff; }
.swatch { left: 2px; top: 5px; width: 24px; height: 11px; background: #000; }
.caret { right: 5px; width: 8px; height: 5px; }
.position { margin-left: 9px; width: 66px; color: #8d8d8d; }
.mini-select { display: flex; position: relative; width: 46px; height: 18px; border: 1px solid #a5a5a5; color: #8d8d8d; }
.mini-select select { appearance: none; width: 100%; padding-left: 1px; background: linear-gradient(#ccc, #ccc) right / 14px 100% no-repeat; opacity: 1; color: inherit; }
.mini-select svg { position: absolute; right: 2px; top: 5px; width: 10px; height: 6px; }

.actions { display: flex; gap: 6px; padding: 15px 3px 0 4px; }
.actions .spacer { flex: 1; }
.actions button { width: 67px; height: 23px; background: #e1e1e1; border: 1px solid #adadad; }
.annotations { position: absolute; left: 0; top: 0; width: 100%; height: 100%; pointer-events: none; overflow: visible; }
```
